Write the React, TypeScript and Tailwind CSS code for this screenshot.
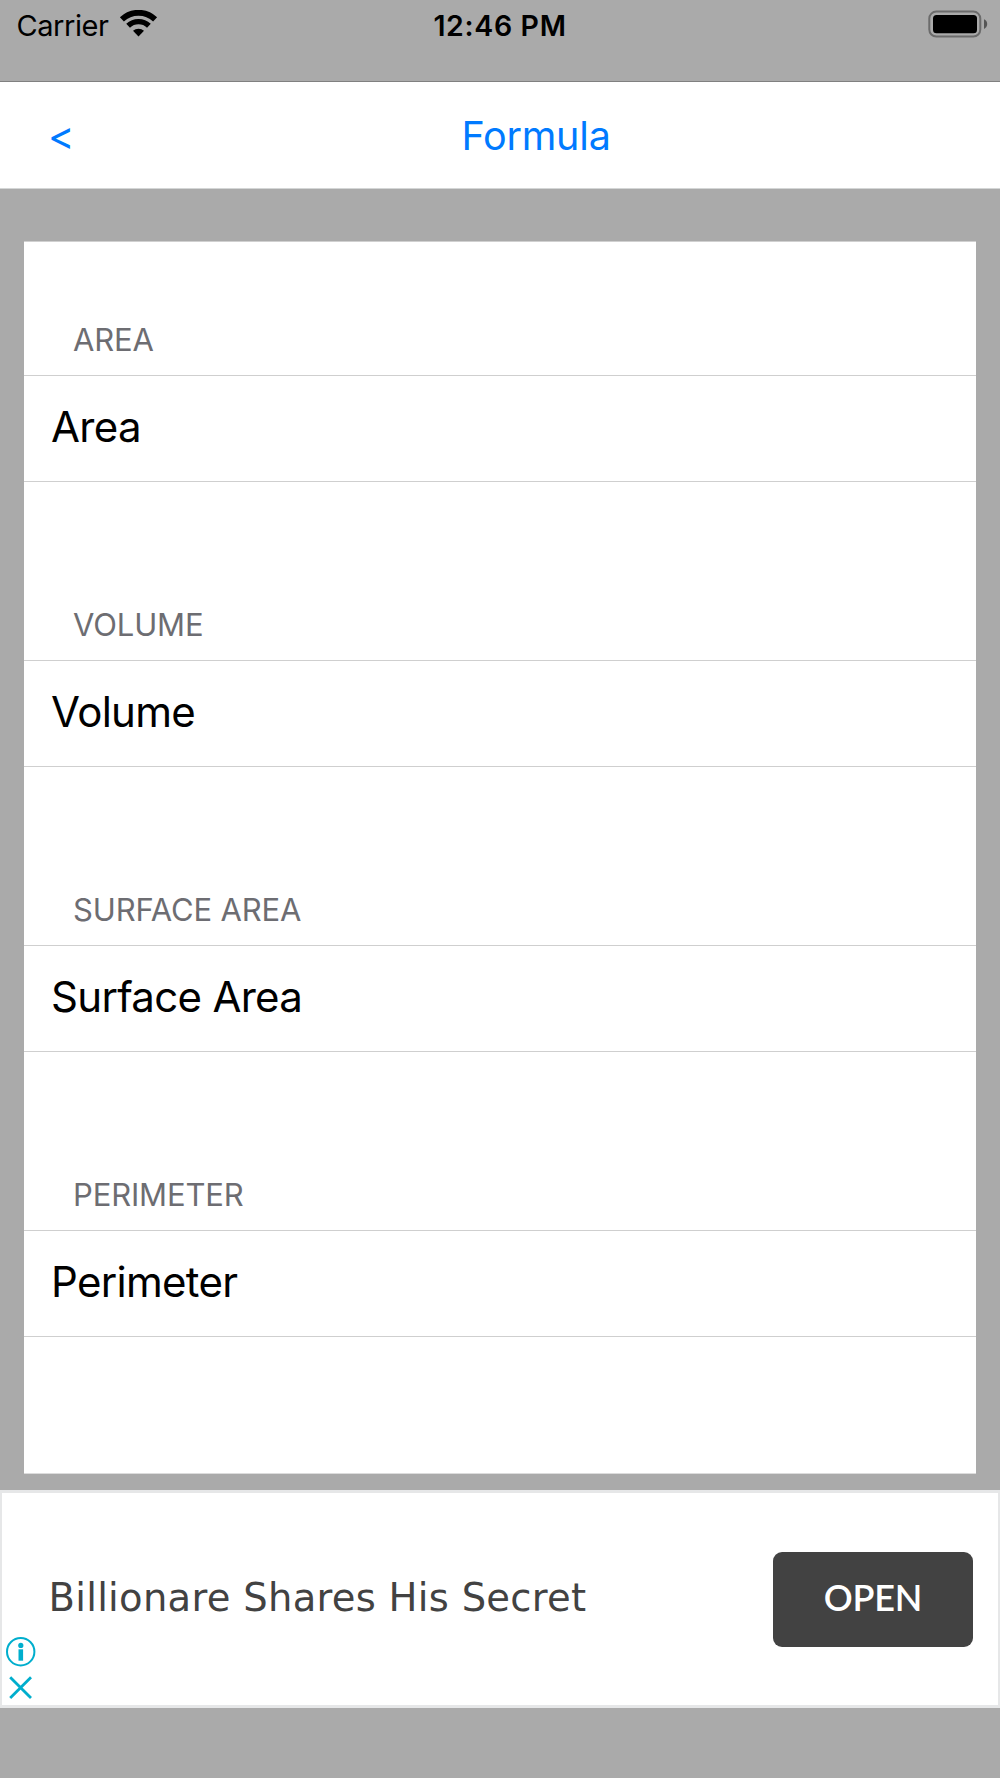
const sections = [
  { header: "AREA", row: "Area" },
  { header: "VOLUME", row: "Volume" },
  { header: "SURFACE AREA", row: "Surface Area" },
  { header: "PERIMETER", row: "Perimeter" },
];

function WifiIcon() {
  return (
    <svg className="ml-[11px] h-[28px] w-[39px] shrink-0" viewBox="-19.5 -26.8 39 28" fill="none" stroke="#000">
      <path d="M-16.6 -17.4A24 24 0 0 1 16.6 -17.4" strokeWidth="5.8" />
      <path d="M-10.4 -11A15.1 15.1 0 0 1 10.4 -11" strokeWidth="5.4" />
      <path d="M-5.5 -6A8.4 8.4 0 0 1 5.5 -6L0 -0.2Z" fill="#000" stroke="none" />
    </svg>
  );
}

function BatteryIcon() {
  return (
    <svg className="h-[28px] w-[60px]" viewBox="0 0 60 28">
      <rect x="1.3" y="1.6" width="51" height="25" rx="7" fill="none" stroke="#6b6b6b" strokeWidth="2" />
      <rect x="5" y="5" width="44" height="18.3" rx="3.5" fill="#000" />
      <path d="M56 9.2C58 10 59.2 11.8 59.2 14S58 18 56 19Z" fill="#555" />
    </svg>
  );
}

function StatusBar() {
  return (
    <header className="grid h-[81px] grid-cols-3 items-start pt-[10px] leading-[31px] text-black">
      <div className="flex items-start pl-[16.5px]">
        <span className="text-[29px] tracking-[-0.45px]">Carrier</span>
        <WifiIcon />
      </div>
      <span className="text-center text-[28.5px] font-semibold tracking-[0.65px]">12:46 PM</span>
      <div className="flex justify-end pr-[12px]">
        <BatteryIcon />
      </div>
    </header>
  );
}

function AdBanner() {
  return (
    <aside className="flex h-[218px] border-x-2 border-y-[3px] border-[#e6e7e8] bg-white">
      <div className="flex w-[46.5px] shrink-0 flex-col justify-end pb-[5px] pl-[4px]">
        <svg className="h-[30px] w-[30px]" viewBox="0 0 30 30" fill="none" stroke="#00aecd">
          <circle cx="14.7" cy="14.7" r="13.7" strokeWidth="2" />
          <circle cx="14.8" cy="8.4" r="2.6" fill="#00aecd" stroke="none" />
          <path d="M14.8 12.3V23.7" strokeWidth="4.6" />
        </svg>
        <svg className="mt-[8px] h-[25px] w-[30px]" viewBox="0 0 30 25" stroke="#00aecd" strokeWidth="2.8">
          <path d="M4.2 2.2L25 23M25 2.2L4.2 23" />
        </svg>
      </div>
      <p className="flex-1 whitespace-nowrap pt-[80px] font-['DejaVu_Sans',sans-serif] text-[38.5px] leading-[50px] tracking-[0.28px] text-[#424242]">
        Billionare Shares His Secret
      </p>
      <button className="mr-[25px] mt-[59px] flex h-[95px] w-[200px] items-center justify-center rounded-[9px] bg-[#424242] pb-[6px] font-['Lato',sans-serif] text-[36px] font-semibold tracking-[-0.2px] text-white">
        OPEN
      </button>
    </aside>
  );
}

export default function App() {
  return (
    <div className="flex h-[1778px] w-[1000px] flex-col bg-[#aaaaaa] font-['Inter',sans-serif]">
      <StatusBar />
      <nav className="flex h-[108px] items-center border-b border-t border-b-[#d4d6d6] border-t-[#808080] bg-white pt-[3px] text-[#007aff]">
        <button className="w-[72px] pb-[2px] pl-[48px] text-left text-[40px]">&lt;</button>
        <h1 className="flex-1 text-center text-[39.5px] tracking-[-0.2px]">Formula</h1>
      </nav>
      <main className="mx-[24px] mt-[52px] h-[1233px] border-b border-t border-b-[#dcdcdc] border-t-[#d0d0d0] bg-white">
        {sections.map((s) => (
          <section key={s.header} className="group">
            <h2 className="flex h-[178px] items-end pb-[4px] pl-[49px] text-[31px] leading-[33px] tracking-[-0.15px] text-[#6d6d72] group-first:h-[133px]">
              <span className="pb-[15px]">{s.header}</span>
            </h2>
            <div className="flex h-[107px] items-center border-b border-t border-[#cfcfcf] pb-[4px] pl-[27px] text-[42px] tracking-[-0.7px] text-black">
              {s.row}
            </div>
          </section>
        ))}
      </main>
      <div className="h-[16px] shrink-0" />
      <AdBanner />
    </div>
  );
}
